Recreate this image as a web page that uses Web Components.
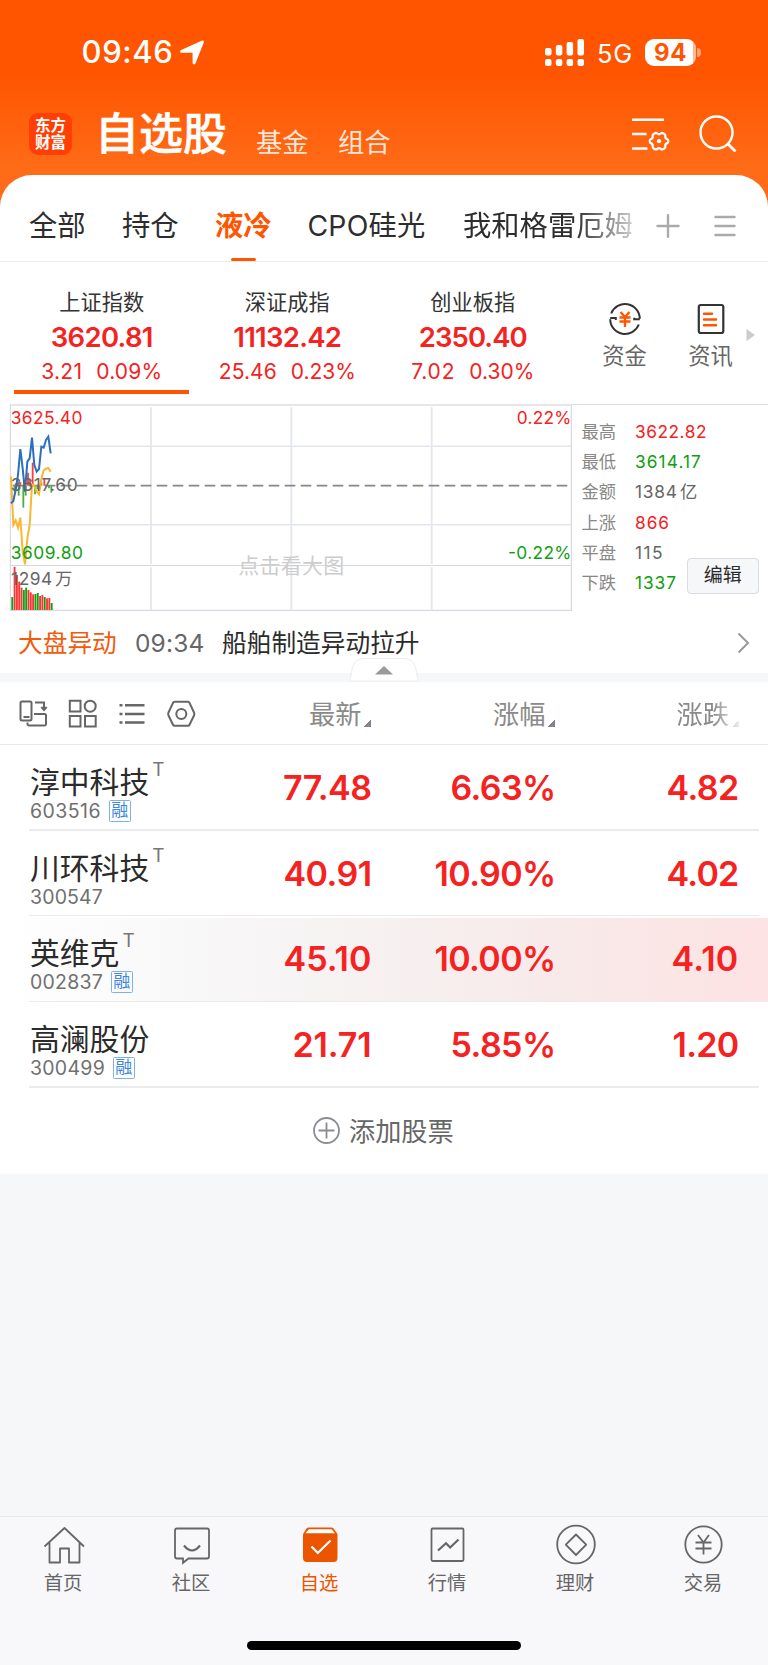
<!DOCTYPE html>
<html lang="zh-CN">
<head>
<meta charset="utf-8">
<title>自选股</title>
<style>
html,body{margin:0;padding:0}
body{width:768px;height:1665px;overflow:hidden;background:#f6f7f9;font-family:Inter,"Noto Sans CJK SC",sans-serif;color:#2b2b2b}
</style>
</head>
<body>
<watch-app></watch-app>
<script>
const define = (name, html, init) => customElements.define(name, class extends HTMLElement {
  constructor() { super(); this.attachShadow({mode: 'open'}); }
  connectedCallback() {
    if (this.ready) return;
    this.ready = true;
    const t = document.createElement('template');
    t.innerHTML = typeof html === 'function' ? html(this) : html;
    this.shadowRoot.append(t.content.cloneNode(true));
    if (init) init(this);
  }
});

/* A run of text tracked to take exactly w pixels. */
define('fit-text', '<style>:host{display:inline-block;white-space:pre;flex:none}</style><slot></slot>', el => {
  const w = parseFloat(el.getAttribute('w'));
  const nat = el.getBoundingClientRect().width;
  const n = el.textContent.length;
  el.style.letterSpacing = ((w - nat) / n) + 'px';
  el.style.width = w + 'px';
});

define('status-bar', `
<style>
:host{display:flex;height:98px;align-items:center;color:#fff;box-sizing:border-box;padding:6px 0 0 81.500px}
.time{font-size:31px;font-weight:500;line-height:40px;margin-right:6.500px}
.net{font-size:25.500px;line-height:30px;margin:3px 12px 0 13px}
.bat{display:flex;align-items:center}
.cell{width:51px;height:27px;border-radius:9px;background:linear-gradient(90deg,#fff 48px,#ffb894 48px);color:#ff5500;font-weight:700;font-size:24px;line-height:27px;box-sizing:border-box;padding-left:9px}
.nub{width:4px;height:9px;border-radius:0 5px 5px 0;background:#ffa477;margin-left:1px}
svg{display:block}
.sig{margin-left:341px}
</style>
<fit-text class="time" w="92">09:46</fit-text>
<svg width="24" height="25" viewBox="0 0 24 25"><path d="M23.3.7c.7.4.8 1 .5 1.8L15.6 23c-.7 1.8-3 1.600-3-.300V13.300l-.5-.5H1.700C-.200 12.800-.500 10.700 1.200 9.900L21.600.8c.7-.3 1.300-.3 1.700-.1z" fill="#fff"/></svg>
<svg class="sig" width="39" height="27" viewBox="0 0 39 27" fill="#fff"><rect y="9" width="6.500" height="7.500" rx="2"/><rect x="10.800" y="6" width="6.500" height="10.500" rx="2"/><rect x="21.600" y="3" width="6.500" height="13.500" rx="2"/><rect x="32.500" width="6.500" height="16.500" rx="2"/><rect y="20" width="6.500" height="7" rx="2"/><rect x="10.800" y="20" width="6.500" height="7" rx="2"/><rect x="21.600" y="20" width="6.500" height="7" rx="2"/><rect x="32.500" y="20" width="6.500" height="7" rx="2"/></svg>
<fit-text class="net" w="36">5G</fit-text>
<div class="bat"><div class="cell"><fit-text w="33">94</fit-text></div><div class="nub"></div></div>`);

define('page-header', `
<style>
:host{display:flex;height:77px;color:#fff;box-sizing:border-box;padding:15px 0 0 29px;align-items:flex-start}
.logo{width:43px;height:42px;border-radius:9px;background:#ff3f05;font-size:15.500px;font-weight:700;line-height:17.500px;box-sizing:border-box;padding:3.500px 0 0 6px;margin-right:23px}
.logo div{height:17.500px}
h1{margin:0 28px 0 0;font-size:44px;font-weight:500;-webkit-text-stroke:.5px #fff;line-height:42px;height:42px;width:133px;white-space:nowrap}
.o{font-size:26.300px;line-height:30px;margin:15px 30px 0 0;width:52px;white-space:nowrap;color:#ffe6d9}
svg{display:block}
.set{margin:5px 29px 0 212px}
.find{margin-top:1px}
</style>
<div class="logo"><div>东方</div><div>财富</div></div>
<h1>自选股</h1><div class="o">基金</div><div class="o">组合</div>
<svg class="set" width="38" height="34" viewBox="0 0 38 34" fill="none" stroke="#fff" stroke-width="2.400"><path d="M0 1.800h32M0 16h14.500M0 30.500h15.500"/><path stroke-width="2.200" stroke-linejoin="round" d="M23 15.200Q24.200 14.500 25.200 15.500Q27 17 28.800 15.500Q29.800 14.500 31 15.200L32.600 16.200Q33.600 17 33.300 18.500Q33.300 20.800 35.200 21.200Q36.300 21.600 36.300 23.200Q36.300 24.800 35.200 25.200Q33.300 25.600 33.300 27.900Q33.600 29.400 32.600 30.200L31 31.200Q29.800 31.900 28.800 30.900Q27 29.400 25.200 30.900Q24.200 31.900 23 31.200L21.400 30.200Q20.400 29.400 20.700 27.900Q20.700 25.600 18.800 25.200Q17.700 24.800 17.700 23.200Q17.700 21.600 18.800 21.200Q20.700 20.800 20.700 18.500Q20.400 17 21.400 16.200Z"/><circle cx="27" cy="23.200" r="2.100" fill="#fff" stroke="none"/></svg>
<svg class="find" width="38" height="38" viewBox="0 0 38 38" fill="none" stroke="#fff" stroke-width="2.400"><circle cx="17.500" cy="18.500" r="16"/><path stroke-width="2.800" d="M28.500 29.500l8 8"/></svg>`);

define('group-tabs', `
<style>
:host{display:block;background:#ff6b18}
nav{display:grid;grid-template-columns:93px 93px 92.500px 155.500px 176px 15px 1fr;grid-template-rows:86px;height:87px;box-sizing:border-box;padding:0 0 0 29px;background:#fff;border-radius:32px 32px 0 0;border-bottom:1px solid #ececee;font-size:28.300px;line-height:102px;color:#2d2d2d;white-space:nowrap}
.on{color:#ff5500;font-weight:700;position:relative}
.on::after{content:"";position:absolute;left:16px;bottom:0;width:25px;height:3.500px;border-radius:1.500px;background:#ff5500}
.fade{-webkit-mask:linear-gradient(90deg,#000 112px,rgba(0,0,0,.2) 172px);mask:linear-gradient(90deg,#000 112px,rgba(0,0,0,.2) 172px)}
svg{display:block;margin-top:39px;margin-left:2px}
</style>
<nav><span>全部</span><span>持仓</span><span class="on">液冷</span><span><fit-text w="118">CPO硅光</fit-text></span><span class="fade">我和格雷厄姆</span><i></i>
<svg width="81" height="24" viewBox="0 0 81 24" fill="none" stroke="#aaa" stroke-width="2.400" stroke-linecap="round"><path d="M1.500 12h21M12 1.200v21.500M59.500 3h19M59.500 12h19M59.500 21h19"/></svg></nav>`);

define('index-card', el => `
<style>
:host{display:flex;flex-direction:column;align-items:center;width:185.500px;height:142px;box-sizing:border-box;padding-top:25px;color:#f52222}
.n{color:#333;font-size:21.200px;line-height:30px;height:30px}
.p{font-size:27.500px;font-weight:600;line-height:40px;height:40px}
.c{display:flex;gap:14px;font-size:21px;line-height:29px;height:29px}
i{width:175px;height:3.500px;margin-top:4px;background:${el.hasAttribute('on') ? '#ff5500' : 'transparent'}}
</style>
<div class="n">${el.getAttribute('name')}</div>
<fit-text class="p" w="${el.getAttribute('pw')}">${el.getAttribute('price')}</fit-text>
<div class="c"><fit-text w="${el.getAttribute('cw')}">${el.getAttribute('chg')}</fit-text><fit-text w="${el.getAttribute('rw')}">${el.getAttribute('rate')}</fit-text></div><i></i>`);

define('index-strip', `
<style>
:host{display:flex;height:142px;padding-left:9px;background:#fff}
.q{width:86px;flex:none;display:flex;flex-direction:column;align-items:center;padding-top:40px;font-size:22.300px;line-height:32px;color:#666}
.q svg{display:block;margin-bottom:4px}
.q:first-of-type{margin-left:16px}
.more{margin:67px 0 0 -8px;flex:none}
</style>
<index-card on name="上证指数" price="3620.81" pw="102" chg="3.21" cw="41" rate="0.09%" rw="66"></index-card>
<index-card name="深证成指" price="11132.42" pw="108" chg="25.46" cw="58" rate="0.23%" rw="65"></index-card>
<index-card name="创业板指" price="2350.40" pw="108" chg="7.02" cw="44" rate="0.30%" rw="65"></index-card>
<div class="q"><svg width="34" height="34" viewBox="0 0 34 34" fill="none" stroke="#333" stroke-width="2"><path d="M3.200 11.500A14.800 14.800 0 0 1 31.800 16.800M31.800 17.300h-5.600v-1.600M30.800 22.500A14.800 14.800 0 0 1 2.200 17.200M2.200 16h5.600v2"/><path d="M12.500 10l4.500 5 4.500-5M11.500 15.500h11M11.500 19.500h11M17 15v10" stroke="#ff5500" stroke-width="2.300"/></svg>资金</div>
<div class="q"><svg width="34" height="34" viewBox="0 0 34 34" fill="none" stroke="#333" stroke-width="2.200"><rect x="4.800" y="3" width="24.500" height="28" rx="2"/><path d="M10 11.800h8M10 17.500h12M10 23.200h12" stroke="#ff5500" stroke-width="2.500" stroke-linecap="round"/></svg>资讯</div>
<svg class="more" width="10" height="12" viewBox="0 0 10 12"><path d="M.5 0L9 6 .5 12z" fill="#ccc"/></svg>`);

define('minute-chart', () => {
  const vol = [['g',606],['r',516],['r',540],['r',560],['r',578],['g',585],['g',578],['r',585],['r',592],['r',598],['g',597],['g',594],['r',603],['r',600],['g',606],['r',610],['r',609],['g',624]];
  const col = {r:'#f33', g:'#0fa00f'};
  const flow = [['r',61,262],['r',84,233],['r',90,255],['r',98,203],['r',124,262],['r',133,250],['g',44,290],['g',56,302],['g',70,338],['g',77,302],['g',105,298],['g',112,282],['g',119,282],['g',147,280],['g',154,293]];
  return `
<style>:host{display:block;width:572px;height:208px}svg{display:block}text{font-size:52px}.u{word-spacing:-10px}</style>
<svg width="572" height="208" viewBox="0 27 1716 624" fill="none">
<g stroke="#e4e6ed" stroke-width="5.500"><path d="M453 37V507M453 517V644M874 37V507M874 517V644M1295 37V507M1295 517V644"/><path stroke-width="4.500" d="M33 154H1714M33 389H1714"/></g>
<path d="M31 28V647M1714 28V647M31 511.500H1714M31 646H1716" stroke="#d7d9e0" stroke-width="3.500"/>
<path d="M31 30H1716" stroke="#dcdce4" stroke-width="5"/>
<text x="715" y="533" fill="#ccc" style="font-size:63px" textLength="318">点击看大图</text>
<path d="M38 272H1714" stroke="#888" stroke-width="5" stroke-dasharray="32 16"/>
${flow.map(([c,x,y]) => `<path d="M${x} 272V${y}" stroke="${c === 'r' ? '#f24444' : '#4caf3f'}" stroke-width="5.500"/>`).join('')}
<path d="M33 245L40 390 47 376 54 398 61 368 68 470 75 508 82 430 89 390 96 268 103 272 110 290 117 298 124 252 131 226 138 221 145 219 152 230" stroke="#fdb62f" stroke-width="6"/>
<path d="M33 325L40 318 47 285 54 240 61 162 68 220 75 290 82 200 89 190 96 128 103 210 110 230 117 222 124 155 131 158 138 135 145 125 152 175" stroke="#2a6fc0" stroke-width="6"/>
${vol.map(([c,y], i) => `<rect x="${34 + i * 6.950}" y="${y}" width="5.600" height="${645 - y}" fill="${col[c]}"/>`).join('')}
<text x="32" y="86" fill="#f52222" textLength="215">3625.40</text>
<text x="32" y="289" fill="#666" textLength="201">3617.60</text>
<text x="32" y="492" fill="#0fa00f" textLength="217">3609.80</text>
<text class="u" x="33" y="569" fill="#666" textLength="184">1294 万</text>
<text x="1550" y="86" fill="#f52222" textLength="164">0.22%</text>
<text x="1524" y="492" fill="#0fa00f" textLength="190">-0.22%</text>
</svg>`;
});

define('stat-list', () => {
  const rows = [['最高','3622.82',72,'#f52222'],['最低','3614.17',67,'#0fa00f'],['金额','1384 亿',63,'#666'],['上涨','866',35,'#f52222'],['平盘','115',29,'#666'],['下跌','1337',42,'#0fa00f']];
  return `
<style>
:host{display:block;flex:1;border-top:1.500px solid #dcdce4;box-sizing:border-box;height:208px;padding:11.500px 0 0 9.500px;position:relative}
div{display:flex;height:30.400px;line-height:30.400px;font-size:17.300px;color:#888}
span{width:53.500px}
fit-text{word-spacing:-3.500px}
button{position:absolute;left:115px;top:153px;width:71.500px;height:35.500px;padding:0;border:1px solid #d9dce3;border-radius:4px;background:#f6f7f9;font:19px/33px Inter,"Noto Sans CJK SC",sans-serif;color:#2b2b2b}
</style>
${rows.map(r => `<div><span>${r[0]}</span><fit-text w="${r[2]}" style="color:${r[3]}">${r[1]}</fit-text></div>`).join('')}
<button>编辑</button>`;
});

define('news-line', `
<style>
:host{display:block;background:#fff}
.l{display:flex;height:61px;line-height:61px;box-sizing:border-box;padding:.5px 0 0 18px;font-size:24.700px;white-space:nowrap}
.a{width:117px;color:#f25b0b}.t{color:#666;font-size:24.500px;margin-right:17.500px}
.l svg{display:block;margin:19px 0 0 317px}
.s{height:9px;background:#f6f7f9;position:relative}
.s svg{position:absolute;left:349px;top:-16px}
</style>
<div class="l"><span class="a">大盘异动</span><fit-text class="t" w="69.500">09:34</fit-text><span>船舶制造异动拉升</span>
<svg width="13" height="22" viewBox="0 0 13 22" fill="none" stroke="#999" stroke-width="2"><path d="M1.500 1.500L11 11 1.500 20.500"/></svg></div>
<div class="s"><svg width="70" height="25" viewBox="0 0 70 25"><path d="M1 24C3 15 2 1.500 15 1.500H55C68 1.500 67 15 69 24z" fill="#fff" stroke="#ededf0"/><path d="M26 17.500l9-8.500 9 8.500z" fill="#999"/></svg></div>`);

define('list-toolbar', `
<style>
:host{display:grid;grid-template-columns:19px 290px 184px 183.500px 1fr;height:63px;box-sizing:border-box;background:#fff;border-bottom:1px solid #e8e8ea;font-size:26.200px;line-height:66px;color:#8a8a8a;white-space:nowrap}
.i{display:block;margin-top:17px}
span{height:62px}
span::after{content:"";display:inline-block;width:7px;height:7px;margin-left:3px;vertical-align:-2.500px;background:linear-gradient(135deg,transparent 50%,#84848e 50%)}
.f{width:64px;-webkit-mask:linear-gradient(90deg,#000 36px,rgba(0,0,0,.15) 62px);mask:linear-gradient(90deg,#000 36px,rgba(0,0,0,.15) 62px)}
</style><i></i>
<svg class="i" width="180" height="30" viewBox="0 0 180 30" fill="none" stroke="#666" stroke-width="2"><rect x="1.500" y="2.500" width="11" height="19" rx="1.500"/><path d="M4.500 18h6M16 3.500h9v7M22.300 8l2.700 3 2.700-3M15 15h10.500a1.500 1.500 0 0 1 1.500 1.500V25a1.500 1.500 0 0 1-1.500 1.500H10A1.500 1.500 0 0 1 8.500 25v-1.500"/><path d="M50.800 1.800H61.500V12.500H50.800zM50.800 17H61.500V27.500H50.800zM66 17H76.700V27.500H66z"/><circle cx="71.200" cy="7.200" r="5.500"/><path stroke-width="2.600" d="M106 6.200h19.500M106 15h19.500M106 23.500h19.500M100.500 6.200h3M100.500 15h3M100.500 23.500h3"/><path stroke-linejoin="round" d="M155.500 2.800h13.500q1 0 1.500 1l4.500 9.700q.7 1.500 0 3l-4.500 9.200q-.5 1-1.500 1h-13.500q-1 0-1.500-1l-4.500-9.200q-.7-1.500 0-3l4.500-9.700q.5-1 1.500-1z"/><circle cx="162.300" cy="15" r="5"/></svg>
<span>最新</span><span>涨幅</span><span class="f">涨跌</span>`);

define('stock-row', el => {
  const a = k => el.getAttribute(k);
  return `
<style>
:host{display:grid;grid-template-columns:30px 190px 151.500px 184px 183px 1fr;height:85.700px;background:${el.hasAttribute('hot') ? 'linear-gradient(#fff,#fff) 0 0/100% 2px no-repeat,linear-gradient(90deg,#fff 1%,#f6f4f4 38%,#f8e9e9 74%,#fde3e3 98%)' : '#fff'};position:relative}
:host::after{content:"";position:absolute;left:29px;right:9px;bottom:0;height:1.500px;background:#ebebed}
.n{display:flex;height:35px;margin-top:20px;font-size:29.800px;line-height:34px;white-space:nowrap;color:#2b2b2b}
sup{font-size:19px;line-height:20px;margin:-5px 0 0 3px;color:#777}
.c{display:flex;font-size:19.500px;line-height:22px;color:#707070}
b{margin-left:8px;width:21.500px;height:21.500px;box-sizing:border-box;border:1.300px solid #7fb0ea;border-radius:1.500px;font-size:17px;line-height:19px;font-weight:400;color:#3c86df;display:flex;justify-content:center}
.v{font-size:34px;font-weight:600;line-height:86px;height:85px;color:#f52222;text-align:right}
</style><i></i>
<div><div class="n">${a('name')}${el.hasAttribute('t') ? '<sup>T</sup>' : ''}</div>
<div class="c"><fit-text w="${a('cw')}">${a('code')}</fit-text>${el.hasAttribute('margin') ? '<b>融</b>' : ''}</div></div>
<div class="v"><fit-text w="${a('pw')}">${a('price')}</fit-text></div>
<div class="v"><fit-text w="${a('rw')}">${a('rate')}</fit-text></div>
<div class="v"><fit-text w="${a('dw')}">${a('diff')}</fit-text></div>`;
});

define('add-stock', `
<style>:host{display:flex;height:86px;align-items:center;background:#fff;padding-left:313px;gap:8px;font-size:26.200px;line-height:36px;color:#666}svg{display:block}span{padding-top:2px}</style>
<svg width="28" height="28" viewBox="0 0 28 28" fill="none" stroke="#8b8b93" stroke-width="1.800"><circle cx="13.500" cy="13.500" r="12.500"/><path d="M13.500 5.500v16M5.500 13.500h16"/></svg><span>添加股票</span>`);

define('tab-item', `
<style>:host{display:flex;flex-direction:column;align-items:center;width:128px;padding-top:6px;font-size:19.300px;line-height:26px;color:#666}
:host([on]){color:#eb5500}div{padding-right:2px;margin-top:5.500px}svg{margin-right:1px}</style>
<svg width="42" height="42" viewBox="0 0 42 42" fill="none" stroke="currentColor" stroke-width="1.800"></svg><div></div>`, el => {
  const icons = {
    home: '<path d="M1.500 23.500L21.500 5 41 23.500M6.500 19.500V39.500H17V25.500H26V39.500H36.500V19.500" stroke-linejoin="round"/>',
    chat: '<path d="M6 5.500H36q2 0 2 2V33.500q0 2-2 2H17.500L12 39.800V35.500H6q-2 0-2-2V7.500q0-2 2-2z"/><path stroke-width="2.200" d="M13 22.500q8 10 16 0"/>',
    pick: '<path d="M9.500 4.500H32.500q1.200 0 2 .9L37.500 9.500q1 1.200 1 2.500V35q0 4-4 4H8q-4 0-4-4V12q0-1.300 1-2.500L7.500 5.400q.8-.9 2-.9z" fill="currentColor" stroke="none"/><path d="M9.800 6.300H32.600L36 10.200H6.500z" fill="#fff" stroke="none"/><path d="M12.500 23.500L18.800 30 31.500 17.500" stroke="#fff" stroke-width="2.200"/>',
    line: '<rect x="4.500" y="5.500" width="32" height="32.500" rx="1.200"/><path stroke-width="2.200" d="M11 27.500L19 20.200 23.200 24.500 31.500 16.500"/>',
    coin: '<circle cx="21" cy="21.500" r="18.800"/><path d="M21 11.500L31.200 21.700 21 32 10.800 21.700z" stroke-linejoin="round"/>',
    yuan: '<circle cx="20.500" cy="21.500" r="18.200"/><path d="M15 12L20.500 19.500 26 12M12.500 19.500H28.500M12.500 25.500H28.500M20.500 19.500V31.500"/>'
  };
  el.shadowRoot.querySelector('svg').innerHTML = icons[el.getAttribute('icon')];
  el.shadowRoot.querySelector('div').textContent = el.getAttribute('label');
});

define('tab-bar', `
<style>:host{display:block;height:149.500px;box-sizing:border-box;border-top:1.300px solid #e9e9ec;background:#f8f8fb}
nav{display:flex;height:124px}.h{width:274px;height:9.500px;border-radius:5px;background:#000;margin:0 auto}</style>
<nav><tab-item icon="home" label="首页"></tab-item><tab-item icon="chat" label="社区"></tab-item><tab-item on icon="pick" label="自选"></tab-item><tab-item icon="line" label="行情"></tab-item><tab-item icon="coin" label="理财"></tab-item><tab-item icon="yuan" label="交易"></tab-item></nav><div class="h"></div>`);

define('watch-app', `
<style>
:host{display:flex;flex-direction:column;width:768px;height:1665px}
header{height:175px;background:linear-gradient(#ff5500 75px,#ff6d19 175px)}
.c{display:flex;height:208px;background:#fff}
.g{flex:1;background:#f6f7f9}
</style>
<header><status-bar></status-bar><page-header></page-header></header>
<group-tabs></group-tabs><index-strip></index-strip>
<div class="c"><minute-chart></minute-chart><stat-list></stat-list></div>
<news-line></news-line><list-toolbar></list-toolbar>
<stock-row name="淳中科技" t code="603516" cw="71" margin price="77.48" pw="88.500" rate="6.63%" rw="105" diff="4.82" dw="72"></stock-row>
<stock-row name="川环科技" t code="300547" cw="73" price="40.91" pw="88" rate="10.90%" rw="121" diff="4.02" dw="72"></stock-row>
<stock-row name="英维克" t code="002837" cw="73" margin hot price="45.10" pw="88" rate="10.00%" rw="121" diff="4.10" dw="67"></stock-row>
<stock-row name="高澜股份" code="300499" cw="75" margin price="21.71" pw="79" rate="5.85%" rw="105" diff="1.20" dw="66"></stock-row>
<add-stock></add-stock><div class="g"></div><tab-bar></tab-bar>`);
</script>
</body>
</html>
